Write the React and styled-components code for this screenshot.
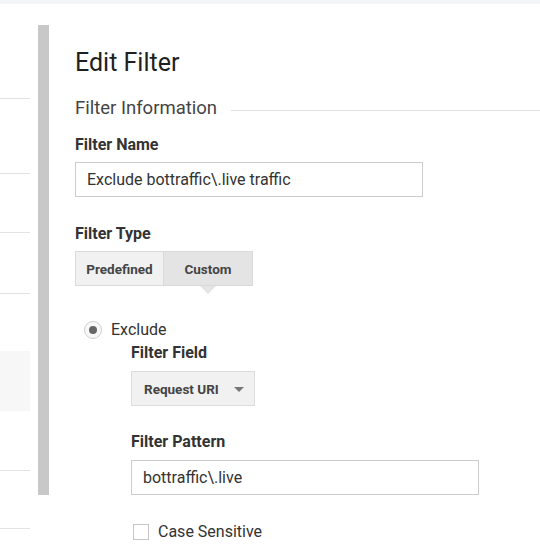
import React from 'react'
import styled, { createGlobalStyle } from 'styled-components'

const GlobalStyle = createGlobalStyle`
    body {
        margin: 0;
        background: #ffffff;
        font-family: Roboto, "Noto Sans", Arial, sans-serif;
    }
`

const Page = styled.div`
    width: 540px;
    height: 560px;
    overflow: hidden;
    background: #ffffff;
`

const TopStrip = styled.div`
    height: 4px;
    background: #f4f5f7;
`

const Layout = styled.div`
    display: flex;
    align-items: flex-start;
`

const Sidebar = styled.div`
    width: 30px;
    margin-right: 8px;
    display: flex;
    flex-direction: column;
`

const SideRow = styled.div`
    height: ${p => p.h}px;
    background: ${p => (p.shaded ? '#f7f7f7' : 'transparent')};
    border-bottom: ${p => (p.line ? '1px solid #e3e3e3' : 'none')};
`

const Handle = styled.div`
    width: 11px;
    height: 470px;
    margin-top: 21px;
    background: #c8c8c8;
`

const Main = styled.div`
    flex: 1;
    padding-left: 26px;
    padding-top: 45px;
`

const Title = styled.div`
    font-size: 25px;
    line-height: 28px;
    color: #1f1f1f;
`

const Section = styled.div`
    display: flex;
    align-items: center;
    margin-top: 19px;
    font-size: 18.5px;
    line-height: 24px;
    color: #444444;

    &::after {
        content: '';
        flex: 1;
        height: 1px;
        margin-left: 14px;
        margin-top: 4px;
        background: #e0e0e0;
    }
`

const Label = styled.div`
    font-size: 16px;
    font-weight: bold;
    line-height: 20px;
    color: #333333;
    margin-top: ${p => p.mt}px;
    margin-bottom: ${p => p.mb || 7}px;
`

const Input = styled.div`
    box-sizing: border-box;
    width: ${p => p.w}px;
    height: 35px;
    border: 1px solid #cccccc;
    padding: 0 11px;
    display: flex;
    align-items: center;
    font-size: 16px;
    color: #333333;
`

const Segmented = styled.div`
    display: flex;
`

const Segment = styled.div`
    position: relative;
    box-sizing: border-box;
    width: 89px;
    height: 35px;
    display: flex;
    align-items: center;
    justify-content: center;
    background: ${p => (p.active ? '#e4e4e4' : '#f1f1f1')};
    border: 1px solid #dadada;
    border-left-width: ${p => (p.active ? 0 : 1)}px;
    font-size: 13.5px;
    font-weight: bold;
    color: #444444;

    &::after {
        display: ${p => (p.active ? 'block' : 'none')};
        content: '';
        position: absolute;
        left: 50%;
        bottom: -9px;
        margin-left: -8px;
        border-left: 8px solid transparent;
        border-right: 8px solid transparent;
        border-top: 8px solid #e4e4e4;
    }
`

const RadioRow = styled.div`
    display: flex;
    align-items: center;
    margin-top: 34px;
    padding-left: 9px;
    font-size: 16px;
    line-height: 20px;
    color: #333333;
`

const Radio = styled.span`
    box-sizing: border-box;
    width: 18px;
    height: 18px;
    border-radius: 50%;
    border: 1px solid #cfcfcf;
    background: #f8f8f8;
    display: flex;
    align-items: center;
    justify-content: center;
    margin-right: 9px;

    &::before {
        content: '';
        width: 8px;
        height: 8px;
        border-radius: 50%;
        background: #666666;
    }
`

const Nested = styled.div`
    padding-left: 56px;
`

const Select = styled.div`
    box-sizing: border-box;
    width: 124px;
    height: 35px;
    display: flex;
    align-items: center;
    justify-content: space-between;
    padding: 0 10px 0 12px;
    background: #f1f1f1;
    border: 1px solid #dddddd;
    font-size: 13.5px;
    font-weight: bold;
    color: #444444;

    &::after {
        content: '';
        margin-top: 2px;
        border-left: 5px solid transparent;
        border-right: 5px solid transparent;
        border-top: 5px solid #777777;
    }
`

const CheckRow = styled.div`
    display: flex;
    align-items: center;
    margin-top: 27px;
    padding-left: 2px;
    font-size: 16px;
    line-height: 20px;
    color: #333333;
`

const Checkbox = styled.span`
    box-sizing: border-box;
    width: 16px;
    height: 16px;
    border: 1px solid #c6c6c6;
    background: #ffffff;
    margin-right: 9px;
`

const sideRows = [
    { h: 94, line: true },
    { h: 74, line: true },
    { h: 58, line: true },
    { h: 60, line: true },
    { h: 57 },
    { h: 60, shaded: true },
    { h: 59, line: true },
    { h: 57, line: true },
]

const App = () => {
    return (
        <Page>
            <GlobalStyle />
            <TopStrip />
            <Layout>
                <Sidebar>
                    {sideRows.map((r, i) => (
                        <SideRow key={i} h={r.h} line={r.line} shaded={r.shaded} />
                    ))}
                </Sidebar>
                <Handle />
                <Main>
                    <Title>Edit Filter</Title>
                    <Section>Filter Information</Section>
                    <Label mt={15}>Filter Name</Label>
                    <Input w={348}>Exclude bottraffic\.live traffic</Input>
                    <Label mt={27}>Filter Type</Label>
                    <Segmented>
                        <Segment>Predefined</Segment>
                        <Segment active>Custom</Segment>
                    </Segmented>
                    <RadioRow>
                        <Radio />
                        Exclude
                    </RadioRow>
                    <Nested>
                        <Label mt={3} mb={8}>Filter Field</Label>
                        <Select>Request URI</Select>
                        <Label mt={26} mb={8}>Filter Pattern</Label>
                        <Input w={348}>bottraffic\.live</Input>
                        <CheckRow>
                            <Checkbox />
                            Case Sensitive
                        </CheckRow>
                    </Nested>
                </Main>
            </Layout>
        </Page>
    )
}

export default App
